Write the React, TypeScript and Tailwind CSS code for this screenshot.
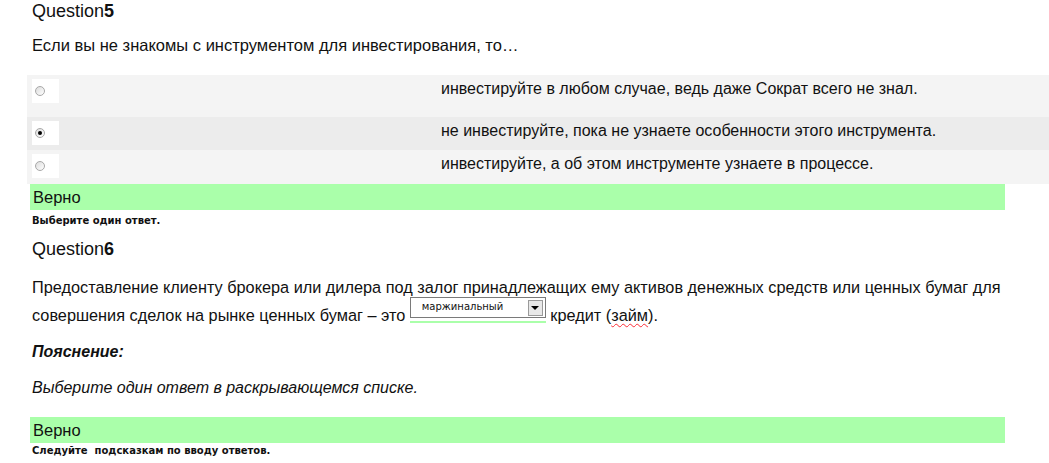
const OPTIONS = [
  { text: "инвестируйте в любом случае, ведь даже Сократ всего не знал.", checked: false, h: "h-[42px]", bg: "bg-[#f4f4f4]" },
  { text: "не инвестируйте, пока не узнаете особенности этого инструмента.", checked: true, h: "h-[33px]", bg: "bg-[#ececec]" },
  { text: "инвестируйте, а об этом инструменте узнаете в процессе.", checked: false, h: "h-[34px]", bg: "bg-[#f4f4f4]" },
];

function Radio({ checked }: { checked: boolean }) {
  return (
    <span className="w-[27px] h-[24px] bg-white flex items-center pl-[3px] shrink-0">
      <span className="w-[10px] h-[10px] rounded-full border border-[#a8a8a8] bg-gradient-to-br from-[#dcdcdc] to-white flex items-center justify-center">
        {checked && <span className="w-[4px] h-[4px] rounded-full bg-black" />}
      </span>
    </span>
  );
}

function Correct() {
  return (
    <div className="ml-[3px] w-[975px] h-[26px] bg-[#aaffaa] flex items-center pl-[3px] text-[16.5px] text-[#111]">
      Верно
    </div>
  );
}

export default function App() {
  return (
    <div className="w-[1049px] h-[463px] overflow-hidden bg-white pl-[27px] font-['Liberation_Sans',Arial,sans-serif] text-[#111]">
      <h2 className="pl-[5px] text-[18px] leading-[20px] mt-[1px] font-normal">
        Question<b>5</b>
      </h2>
      <p className="pl-[5px] mt-[14px] text-[16.5px] leading-[20px]">
        Если вы не знакомы с инструментом для инвестирования, то…
      </p>
      <div className="mt-[20px] flex flex-col">
        {OPTIONS.map((o, i) => (
          <label key={i} className={`${o.h} ${o.bg} flex items-start pt-[4px] pl-[5px]`}>
            <Radio checked={o.checked} />
            <span className="ml-[382px] text-[16px] leading-[20px] whitespace-nowrap">{o.text}</span>
          </label>
        ))}
      </div>
      <Correct />
      <p className="pl-[5px] mt-[4px] text-[10px] leading-[14px] font-bold font-['DejaVu_Sans',Verdana,sans-serif]">
        Выберите один ответ.
      </p>
      <h2 className="pl-[5px] mt-[11px] text-[18px] leading-[20px] font-normal">
        Question<b>6</b>
      </h2>
      <p className="pl-[5px] mt-[14px] w-[1000px] text-[16.3px] leading-[28px]">
        Предоставление клиенту брокера или дилера под залог принадлежащих ему активов денежных средств или ценных бумаг для
        совершения сделок на рынке ценных бумаг – это{" "}
        <span className="inline-flex align-top -mt-[4px] flex-col w-[136px]">
          <span className="h-[21px] border border-[#7a7a7a] bg-white flex items-center justify-between pl-[11px] pr-[2px] text-[10px] leading-[12px] font-['DejaVu_Sans',sans-serif]">
            <span className="-mt-[2px]">маржинальный</span>
            <span className="w-[15px] h-[16px] bg-[#e8e8e8] border border-[#9a9a9a] flex items-center justify-center">
              <span className="w-0 h-0 border-l-[4px] border-r-[4px] border-t-[4px] border-l-transparent border-r-transparent border-t-black" />
            </span>
          </span>
          <span className="h-[2px] mt-[3px] bg-[#aaffaa]" />
        </span>{" "}
        кредит (<span className="underline decoration-wavy decoration-red-500 decoration-[1px] underline-offset-2">займ</span>).
      </p>
      <p className="pl-[5px] mt-[12px] text-[16px] leading-[22px] italic font-bold">Пояснение:</p>
      <p className="pl-[5px] mt-[14px] text-[16px] leading-[22px] italic">
        Выберите один ответ в раскрывающемся списке.
      </p>
      <div className="mt-[18px]">
        <Correct />
      </div>
      <p className="pl-[5px] mt-[1px] text-[10px] leading-[14px] font-bold font-['DejaVu_Sans',Verdana,sans-serif]">
        Следуйте&nbsp; подсказкам по вводу ответов.
      </p>
    </div>
  );
}
